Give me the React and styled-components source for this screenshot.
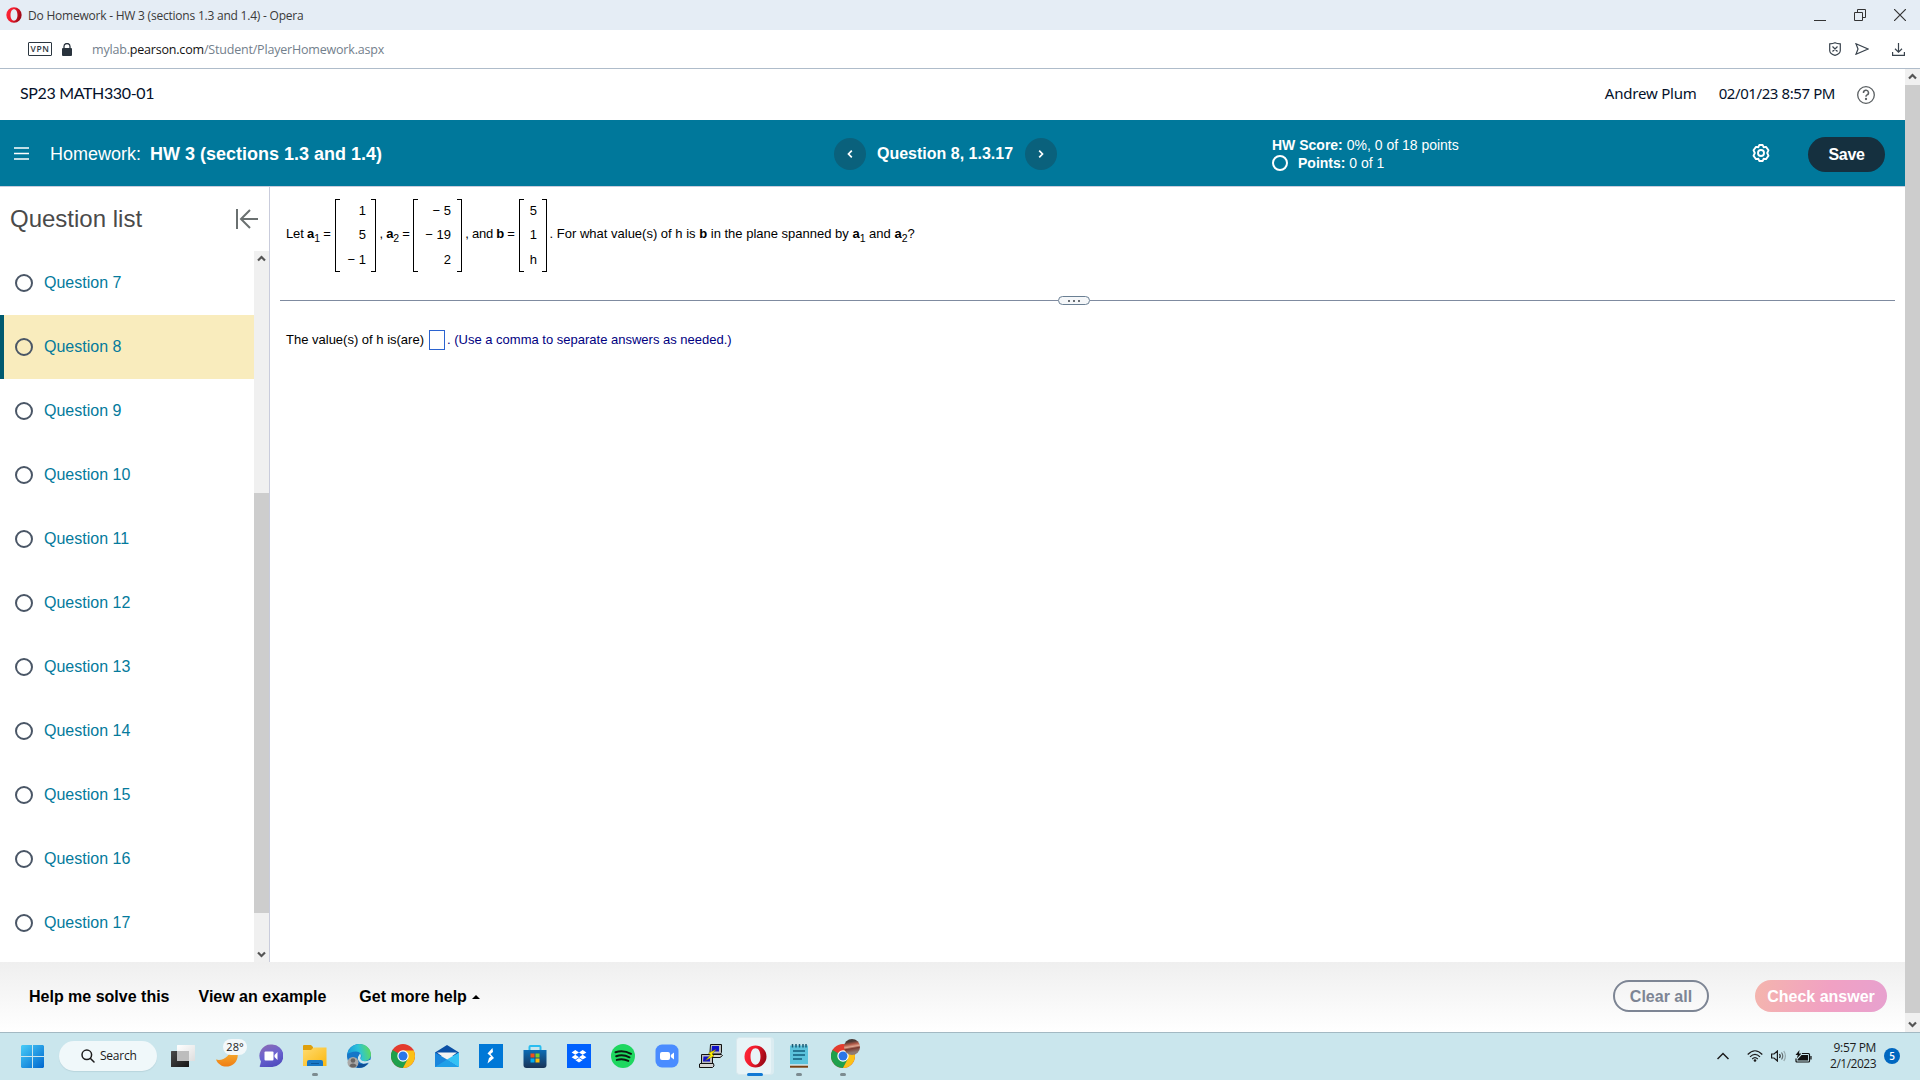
import React from "react";
import styled, { createGlobalStyle } from "styled-components";

const ui = `"Open Sans", "Noto Sans", sans-serif`;
const noto = `"Noto Sans", sans-serif`;
const arial = `"Liberation Sans", Arial, sans-serif`;

const Global = createGlobalStyle`
  *, *::before, *::after { box-sizing: border-box; }
  body { margin: 0; overflow: hidden; background: #fff; font-family: ${arial}; }
  svg { display: block; flex: none; }
`;

const Screen = styled.div`
  display: flex;
  flex-direction: column;
  width: 1920px;
  height: 1080px;
  overflow: hidden;
`;

const Text = styled.span`
  display: block;
  flex: none;
  white-space: pre;
  font-family: ${(p) => p.$font || arial};
  font-size: ${(p) => p.$size || 16}px;
  font-weight: ${(p) => p.$weight || 400};
  letter-spacing: ${(p) => p.$track || 0}px;
  line-height: ${(p) => p.$line || 20}px;
  color: ${(p) => p.$color || "inherit"};
`;

/* browser chrome */
const TitleBar = styled.header`
  display: flex;
  align-items: center;
  height: 30px;
  padding: 0 14px 0 6px;
  background: #e5edf5;
`;
const TitleText = styled(Text)`
  margin-left: 6px;
  padding-top: 2px;
`;
const WindowButtons = styled.div`
  display: flex;
  gap: 28px;
  margin-left: auto;
`;
const AddressBar = styled.div`
  display: flex;
  align-items: center;
  height: 39px;
  padding: 0 15px 0 28px;
  border-bottom: 1px solid #afbcca;
`;
const VpnBadge = styled.div`
  display: flex;
  align-items: center;
  justify-content: center;
  width: 24px;
  height: 14px;
  margin-right: 10px;
  border: 1px solid #2b3640;
  border-radius: 1px;
`;
const Url = styled(Text)`
  margin-left: 20px;
  padding-top: 2px;
  color: #73808c;
  b { font-weight: 400; color: #111; }
`;
const AddressTools = styled.div`
  display: flex;
  align-items: center;
  margin-left: auto;
  svg + svg { margin-left: 14px; }
  svg + svg + svg { margin-left: 23px; }
`;

/* page */
const Viewport = styled.div`
  display: flex;
  height: 963px;
`;
const Page = styled.div`
  display: flex;
  flex-direction: column;
  width: 1905px;
`;
const Scroll = styled.div`
  display: flex;
  flex-direction: column;
  justify-content: space-between;
  align-items: center;
  flex: none;
  width: 15px;
  padding: 4px 0;
  background: linear-gradient(#cdcdcd, #cdcdcd) 0 ${(p) => p.$from}px / 15px ${(p) => p.$len}px no-repeat #f0f0f0;
`;
const CourseBar = styled.div`
  display: flex;
  align-items: center;
  height: 51px;
  padding: 0 30px 0 20px;
  color: #05112a;
`;
const CourseText = styled(Text)`
  padding-bottom: 3px;
`;
const CourseUser = styled.div`
  display: flex;
  align-items: center;
  gap: 22px;
  margin-left: auto;
`;
const Toolbar = styled.div`
  display: grid;
  grid-template-columns: 834px 438px 480px 1fr;
  align-items: center;
  height: 67px;
  background: #00789b;
  border-bottom: 1px solid #c9ccdc;
  color: #fff;
`;
const Crumb = styled.div`
  display: flex;
  align-items: center;
  padding-left: 14px;
`;
const CrumbText = styled.div`
  display: flex;
  gap: 9px;
  margin-left: 21px;
  padding-top: 2px;
`;
const Pager = styled.div`
  display: flex;
  align-items: center;
  padding-top: 2px;
`;
const PagerTitle = styled.div`
  width: 159px;
  padding-left: 11px;
`;
const RoundButton = styled.button`
  display: flex;
  align-items: center;
  justify-content: center;
  width: 32px;
  height: 32px;
  padding: 0;
  border: 0;
  border-radius: 50%;
  background: #0a617c;
`;
const Score = styled.div`
  display: flex;
  flex-direction: column;
  padding-top: 2px;
`;
const ScoreLine = styled.div`
  display: flex;
  align-items: center;
  height: 18px;
`;
const Ring = styled.span`
  flex: none;
  width: ${(p) => p.$d}px;
  height: ${(p) => p.$d}px;
  border: 2px solid ${(p) => p.$c};
  border-radius: 50%;
`;
const PointsRing = styled(Ring)`
  margin-right: 10px;
`;
const ToolbarEnd = styled.div`
  display: flex;
  align-items: center;
`;
const Pill = styled.button`
  display: flex;
  align-items: center;
  justify-content: center;
  flex: none;
  width: ${(p) => p.$w}px;
  height: ${(p) => p.$h}px;
  padding: 0;
  border: ${(p) => p.$border || "0"};
  border-radius: 18px;
  background: ${(p) => p.$bg || "transparent"};
`;
const SaveButton = styled(Pill)`
  margin: 3px 0 0 38px;
`;
const Body = styled.div`
  display: flex;
  height: 775px;
`;
const Sidebar = styled.aside`
  display: flex;
  flex-direction: column;
  width: 270px;
  border-right: 1px solid #c9ccdc;
`;
const SidebarHead = styled.div`
  display: flex;
  align-items: center;
  justify-content: space-between;
  height: 64px;
  padding: 0 11px 0 10px;
`;
const SidebarBody = styled.div`
  display: flex;
  height: 711px;
`;
const List = styled.ul`
  flex: 1;
  margin: 0;
  padding: 0;
  list-style: none;
`;
const Item = styled.li`
  display: flex;
  align-items: center;
  gap: 11px;
  height: 64px;
  padding-left: ${(p) => (p.$active ? 11 : 15)}px;
  border-left: ${(p) => (p.$active ? "4px solid #005a70" : "0")};
  background: ${(p) => (p.$active ? "#f9ecbd" : "transparent")};
`;
const Main = styled.main`
  display: flex;
  flex-direction: column;
  flex: 1;
  padding: 12px 10px 0;
`;
const Problem = styled.div`
  display: flex;
  height: 73px;
  padding-left: 6px;
  color: #000;
`;
const Phrase = styled.div`
  flex: none;
  width: ${(p) => p.$w}px;
  margin-left: ${(p) => p.$pull || 0}px;
  padding-top: 25px;
  white-space: pre;
  font-size: 13px;
  line-height: 20px;
  letter-spacing: ${(p) => p.$track || 0}px;
`;
const Sub = styled.sub`
  font-size: 10.5px;
  line-height: 0;
  vertical-align: -4px;
`;
const Matrix = styled.div`
  display: flex;
  flex: none;
  justify-content: space-between;
  width: ${(p) => p.$w}px;
`;
const Bracket = styled.span`
  width: 5px;
  border: 1px solid #000;
  border-${(p) => p.$open}: 0;
`;
const Cells = styled.div`
  display: flex;
  flex-direction: column;
  flex: 1;
  align-items: flex-end;
  padding: 0 ${(p) => p.$pad}px 0 0;
  font-size: 13px;
  line-height: 24.4px;
  white-space: pre;
`;
const Divider = styled.div`
  display: flex;
  align-items: center;
  height: 9px;
  margin-top: 24px;
`;
const Rule = styled.span`
  width: ${(p) => p.$w}px;
  height: 1px;
  background: #7f8ba0;
`;
const Handle = styled.span`
  display: flex;
  align-items: center;
  justify-content: center;
  gap: 3px;
  width: 32px;
  height: 9px;
  border: 1px solid #6a7f93;
  border-radius: 5px;
  background: #f5f7f9;
  i { width: 2px; height: 2px; background: #6a6f75; }
`;
const Answer = styled.div`
  display: flex;
  align-items: center;
  margin-top: 25px;
  padding-left: 6px;
`;
const AnswerBox = styled.span`
  width: 16px;
  height: 20px;
  margin: 0 2px 0 5px;
  border: 1px solid #2b63d0;
`;
const Footer = styled.footer`
  display: flex;
  align-items: center;
  height: 70px;
  padding: 0 18px 0 29px;
  background: linear-gradient(#efefef, #fff);
`;
const FooterLinks = styled.nav`
  display: flex;
  align-items: center;
  gap: 29px;
`;
const MoreHelp = styled.div`
  display: flex;
  align-items: center;
  gap: 5px;
  margin-left: 4px;
`;
const FooterButtons = styled.div`
  display: flex;
  gap: 46px;
  margin-left: auto;
  padding-bottom: 2px;
`;
const ButtonText = styled(Text)`
  padding-top: 1px;
`;

/* taskbar */
const Taskbar = styled.div`
  display: flex;
  align-items: center;
  height: 48px;
  padding: 0 20px 0 21px;
  border-top: 1px solid #a3b9c3;
  background: #cae6ed;
`;
const SearchBox = styled.div`
  display: flex;
  align-items: center;
  gap: 5px;
  width: 98px;
  height: 30px;
  margin: 0 0 1px 15px;
  padding-left: 22px;
  border-radius: 15px;
  background: #f0f8fa;
  box-shadow: 0 1px 1px #b9d5dd;
`;
const Apps = styled.div`
  display: flex;
  margin-left: 4px;
`;
const App44 = styled.div`
  position: relative;
  display: flex;
  align-items: center;
  justify-content: center;
  width: 44px;
  height: 47px;
  padding-bottom: 1px;
`;
const Tile = styled.div`
  display: flex;
  align-items: center;
  justify-content: center;
  width: 38px;
  height: 38px;
  padding-left: 3px;
  border: 1px solid #d8e8ed;
  border-right: 3px solid #dbecf1;
  border-radius: 4px;
  background: #e8f4f7;
`;
const Running = styled.span`
  position: absolute;
  bottom: 4px;
  left: ${(p) => (p.$active ? 14 : 19)}px;
  width: ${(p) => (p.$active ? 16 : 6)}px;
  height: 3px;
  border-radius: 2px;
  background: ${(p) => (p.$active ? "#0f78d4" : "#7c8b90")};
`;
const TempBadge = styled.span`
  position: absolute;
  top: 6px;
  left: 18px;
  display: flex;
  align-items: center;
  justify-content: center;
  width: 24px;
  height: 16px;
  border-radius: 8px;
  background: #f3f8fa;
`;
const Avatar = styled.span`
  position: absolute;
  top: 6px;
  left: 23px;
  width: 16px;
  height: 16px;
  border-radius: 50%;
  background: linear-gradient(170deg, #4b3a36 20%, #b05a48 35%, #e0a58f 48%, #7a3a30 58%, #8f7a72 80%);
`;
const Tray = styled.div`
  display: flex;
  align-items: center;
  margin-left: auto;
  padding-bottom: 1px;
`;
const TrayIcons = styled.div`
  display: flex;
  align-items: center;
  gap: 8px;
  margin-left: 18px;
`;
const Clock = styled.div`
  display: flex;
  flex-direction: column;
  align-items: flex-end;
  width: 64px;
`;
const Count = styled.span`
  display: flex;
  align-items: center;
  justify-content: center;
  width: 16px;
  height: 16px;
  margin-left: 8px;
  border-radius: 50%;
  background: #0067c0;
`;

const Svg = ({ w, h, children, ...r }) => (
  <svg width={w} height={h} viewBox={`0 0 ${w} ${h}`} fill="none" {...r}>{children}</svg>
);

const OperaLogo = ({ s, id }) => (
  <svg width={s} height={s} viewBox="0 0 24 24">
    <defs>
      <linearGradient id={id} x1="0" y1="0" x2="1" y2="0.3">
        <stop offset="0" stopColor="#ff2a3b" /><stop offset="0.5" stopColor="#f01a2b" /><stop offset="1" stopColor="#a00a18" />
      </linearGradient>
    </defs>
    <path fillRule="evenodd" fill={`url(#${id})`} d="M12 0.500a11.500 11.500 0 1 0 0 23a11.500 11.500 0 1 0 0-23zM12 3.500c3.200 0 5.200 3.600 5.200 8.500s-2 8.500-5.200 8.500s-5.200-3.600-5.200-8.500s2-8.500 5.200-8.500z" />
  </svg>
);

const ScrollArrow = ({ down }) => (
  <Svg w={9} h={7}>
    <path d={down ? "M1 1.500L4.500 5L8 1.500" : "M1 5.500L4.500 2L8 5.500"} stroke="#555" strokeWidth="2.200" />
  </Svg>
);

const Chrome = () => (
  <svg width="24" height="24" viewBox="0 0 24 24">
    <circle cx="12" cy="12" r="12" fill="#e33b2e" />
    <path d="M12 12L1.600 6A12 12 0 0 0 12 24L17.200 15z" fill="#1fa04c" />
    <path d="M12 6.600H22.700A12 12 0 0 1 12 24L17 14.600z" fill="#fbc116" />
    <circle cx="12" cy="12" r="5.700" fill="#fff" />
    <circle cx="12" cy="12" r="4.500" fill="#2b76e8" />
  </svg>
);

const WindowsLogo = () => (
  <Svg w={23} h={23}>
    <defs><linearGradient id="win" x1="0" y1="0" x2="1" y2="1"><stop offset="0" stopColor="#48cdf8" /><stop offset="1" stopColor="#0067cf" /></linearGradient></defs>
    <path fill="url(#win)" d="M1 0H11V11H0V1zM12 0H22L23 1V11H12zM0 12H11V23H1L0 22zM12 12H23V22L22 23H12z" />
  </Svg>
);

const TaskView = () => (
  <Svg w={24} h={22}>
    <defs>
      <linearGradient id="tv" x1="0" y1="0" x2="1" y2="1"><stop offset="0" stopColor="#4a4a4a" /><stop offset="1" stopColor="#151515" /></linearGradient>
      <linearGradient id="tw" x1="0" y1="0" x2="1" y2="1"><stop offset="0" stopColor="#fff" /><stop offset="1" stopColor="#dedede" /></linearGradient>
    </defs>
    <rect x="0" y="6" width="18" height="16" rx="0.500" fill="url(#tv)" />
    <rect x="6" y="0" width="18" height="16" rx="0.500" fill="url(#tw)" />
    <rect x="6" y="6" width="12" height="10" fill="#bdbdbd" />
  </Svg>
);

const Moon = () => (
  <Svg w={24} h={24}>
    <defs><linearGradient id="moon" x1="0" y1="0" x2="0" y2="1"><stop offset="0" stopColor="#f9c23c" /><stop offset="1" stopColor="#ef7d14" /></linearGradient></defs>
    <path fill="url(#moon)" d="M1 15.500C8 17.500 16 12 16.500 2C21 4 23.500 8.500 22.500 13.500C20.500 24.500 5 26 1 15.500z" />
  </Svg>
);

const Chat = () => (
  <Svg w={24} h={24}>
    <defs><linearGradient id="chat" x1="0.200" y1="0" x2="0.600" y2="1"><stop offset="0" stopColor="#8a6bb5" /><stop offset="0.500" stopColor="#6a62d0" /><stop offset="1" stopColor="#4f4bbd" /></linearGradient></defs>
    <path fill="url(#chat)" d="M12 0.500A11.300 11.300 0 1 1 12 23H1.500C0.500 23 0.500 22 1 21.500L2 17.500A11.300 11.300 0 0 1 12 0.500z" />
    <rect x="5.500" y="7.500" width="9" height="9" rx="1" fill="#fff" />
    <path fill="#fff" d="M15.500 11L18.500 8V16L15.500 13z" />
  </Svg>
);

const Folder = () => (
  <Svg w={24} h={24}>
    <defs><linearGradient id="fold" x1="0" y1="0" x2="1" y2="1"><stop offset="0" stopColor="#ffdb70" /><stop offset="1" stopColor="#fbb80f" /></linearGradient></defs>
    <path fill="#dfa00c" d="M0 2Q0 1 1 1H8L10 3V7H0z" />
    <path fill="url(#fold)" d="M0 6H8L10.500 3.500H23.500V22H0z" />
    <path fill="#1878c7" d="M4 22V18Q4 16 6 16H18Q20 16 20 18V22z" />
    <path stroke="#0b579c" strokeWidth="1" d="M8 19.500H16" />
  </Svg>
);

const Edge = () => (
  <Svg w={24} h={24}>
    <defs>
      <linearGradient id="eg" x1="0" y1="0.500" x2="1" y2="0.300"><stop offset="0" stopColor="#1699dd" /><stop offset="0.500" stopColor="#2cc3d8" /><stop offset="1" stopColor="#62dc54" /></linearGradient>
    </defs>
    <circle cx="12" cy="12" r="12" fill="#1677c8" />
    <path fill="url(#eg)" d="M0.300 10C2 3.500 7 0 12.500 0C19 0 24 5 24 10.500C24 14.500 21 17 17.500 17C14 17 13 15.500 14 14C15.500 11 13 7.500 9 7.500C5 7.500 2 9 0.300 10z" />
    <path fill="#cae6ed" d="M13 9.500C15 12 13 13.500 13.500 15C14.500 17.500 19 18 22.500 16H24V18L21 19.500C15 21 10 17.500 11 13z" />
    <path fill="#0e4f96" d="M9 15C10 20 15 21.500 21.500 18.500C19 22.500 14.500 24.500 10 23.600z" />
    <circle cx="6" cy="18.500" r="5.500" fill="#aaa9a7" />
    <circle cx="6" cy="16.500" r="2.300" fill="#696664" />
    <path fill="#696664" d="M2.500 22Q3 19.500 6 19.500T9.500 22Q6 25 2.500 22z" />
  </Svg>
);

const Mail = () => (
  <Svg w={24} h={24}>
    <path fill="#0a4fa5" d="M0 8.500L12 1L24 8.500V12H0z" />
    <path fill="#f3f3f3" d="M2 8.500H22L12 16z" />
    <path fill="#1a86dc" d="M0 8.500L12 15.500L24 23H0z" />
    <path fill="#33c2f5" d="M24 8.500L12 15.500L24 23z" />
    <path fill="#1f9fe8" d="M0 23L12 15.500L24 23z" />
  </Svg>
);

const Bolt = () => (
  <Svg w={24} h={24}>
    <path fill="#0078d7" d="M0 0H24V24H0z" />
    <path fill="#fff" d="M13.500 4L8.500 9.500L12 12.500L10 14L8.500 19.500L15 14L11.500 10L14 8z" />
  </Svg>
);

const Store = () => (
  <Svg w={24} h={24}>
    <defs><linearGradient id="st" x1="0" y1="0" x2="0" y2="1"><stop offset="0" stopColor="#0c6cb5" /><stop offset="1" stopColor="#183458" /></linearGradient></defs>
    <path d="M6.500 7V3Q6.500 2 7.500 2H16.500Q17.500 2 17.500 3V7" stroke="#2bbdf0" strokeWidth="2" />
    <path fill="url(#st)" d="M0.500 6H23.500V21Q23.500 24 20.500 24H3.500Q0.500 24 0.500 21z" />
    <path fill="#f1511b" d="M7.500 9.500H11.500V13.500H7.500z" /><path fill="#80cc28" d="M12.500 9.500H16.500V13.500H12.500z" />
    <path fill="#00adef" d="M7.500 14.500H11.500V18.500H7.500z" /><path fill="#fbbc09" d="M12.500 14.500H16.500V18.500H12.500z" />
  </Svg>
);

const Dropbox = () => (
  <Svg w={24} h={24}>
    <path fill="#0061fe" d="M0 0H24V24H0z" />
    <path fill="#fff" d="M8.300 6L12 8.400L8.300 10.800L4.600 8.400zM15.700 6L19.400 8.400L15.700 10.800L12 8.400zM8.300 10.800L12 13.200L8.300 15.600L4.600 13.200zM15.700 10.800L19.400 13.200L15.700 15.600L12 13.200zM12 14L15.500 16.300L12 18.600L8.500 16.300z" />
  </Svg>
);

const Spotify = () => (
  <Svg w={24} h={24}>
    <circle cx="12" cy="12" r="12" fill="#1ed760" />
    <path d="M4.500 8.200Q12.500 5.800 20 9.800M5.200 12.200Q12 10 18.500 13.300M5.800 15.900Q12 14.200 17.300 16.900" stroke="#0b1a10" strokeWidth="2" strokeLinecap="round" />
  </Svg>
);

const Zoom = () => (
  <Svg w={24} h={24}>
    <rect x="0.500" y="0.500" width="23" height="23" rx="6.500" fill="#4a8cff" />
    <rect x="5" y="8" width="10" height="8" rx="2" fill="#fff" />
    <path fill="#fff" d="M15.800 11L19 8.500V15.500L15.800 13z" />
  </Svg>
);

const Putty = () => (
  <Svg w={24} h={24}>
    <path fill="#bdbdbd" stroke="#111" d="M11.500 0.500H22.500V8.500L21.500 10H12.500L11 8z" />
    <path fill="#1010c8" d="M13 2H20V7.500H12.500z" />
    <path fill="#d4d4d4" stroke="#111" d="M12 10.500H22.500L23.500 11.500L21 13.500H12z" />
    <path fill="#bdbdbd" stroke="#111" d="M2.500 10.500H13.500V19L12.500 19.500H2.500z" />
    <path fill="#1010c8" d="M4.500 12.500H11V17.500H4z" />
    <path fill="#d4d4d4" stroke="#111" d="M1 19.500H14.500L15 22L13.500 23.500H0.500V20z" />
    <path fill="#ffef00" stroke="#6b6500" strokeWidth="0.500" d="M17 5.500L9.500 9L11.500 11L6.500 16.500L15 12L13 10z" />
  </Svg>
);

const Notepad = () => (
  <Svg w={20} h={24}>
    <rect x="1" y="1.500" width="18" height="19" fill="#5cc3dc" />
    <path d="M3.500 0V3.500M7 0V3.500M10.500 0V3.500M14 0V3.500M17 0V3.500" stroke="#1a5a73" strokeWidth="1.500" />
    <path d="M4 7H16M4 11H16M4 15H13" stroke="#135f7c" strokeWidth="1.500" />
    <path d="M1 21H19" stroke="#e9e9e9" strokeWidth="1" />
    <path d="M1 22.700H19" stroke="#7a4112" strokeWidth="2" />
  </Svg>
);

const questions = [7, 8, 9, 10, 11, 12, 13, 14, 15, 16, 17];

const apps = [
  { icon: <TaskView /> },
  { icon: <Moon />, temp: "28°" },
  { icon: <Chat /> },
  { icon: <Folder />, run: true },
  { icon: <Edge /> },
  { icon: <Chrome /> },
  { icon: <Mail /> },
  { icon: <Bolt /> },
  { icon: <Store /> },
  { icon: <Dropbox /> },
  { icon: <Spotify /> },
  { icon: <Zoom /> },
  { icon: <Putty /> },
  { icon: <OperaLogo s={23} id="op2" />, active: true },
  { icon: <Notepad />, run: true },
  { icon: <Chrome />, run: true, avatar: true },
];

export default function App() {
  return (
    <Screen>
      <Global />
      <TitleBar>
        <OperaLogo s={16} id="op1" />
        <TitleText $font={ui} $size={12} $track={-0.22} $color="#3a3a3a">Do Homework - HW 3 (sections 1.3 and 1.4) - Opera</TitleText>
        <WindowButtons>
          <Svg w={12} h={12} stroke="#333"><path d="M0 11.500H12" /></Svg>
          <Svg w={12} h={12} stroke="#333"><path d="M0.500 3.500H8.500V11.500H0.500zM3.500 3.500V0.500H11.500V8.500H8.500" /></Svg>
          <Svg w={12} h={12} stroke="#333" strokeWidth="1.200"><path d="M0 0L12 12M12 0L0 12" /></Svg>
        </WindowButtons>
      </TitleBar>
      <AddressBar>
        <VpnBadge><Text $font={ui} $size={8.5} $weight={600} $track={0.6} $line={12} $color="#2b3640">VPN</Text></VpnBadge>
        <Svg w={10} h={13}><path fill="#29333d" d="M0 6Q0 5 1 5H9Q10 5 10 6V12Q10 13 9 13H1Q0 13 0 12z" /><path d="M2 6V3.500A3 3 0 0 1 8 3.500V6" stroke="#29333d" strokeWidth="1.300" /></Svg>
        <Url $font={ui} $size={12.5} $track={-0.19}>mylab.<b>pearson.com</b>/Student/PlayerHomework.aspx</Url>
        <AddressTools>
          <Svg w={12} h={14} stroke="#39434d" strokeWidth="1.200"><path d="M6 0.700Q8 1.500 11.300 1.800V8.500Q11.300 12 6 13.300Q0.700 12 0.700 8.500V1.800Q4 1.500 6 0.700zM3.500 4.500L8.500 9.500M8.500 4.500L3.500 9.500" /></Svg>
          <Svg w={14} h={12} stroke="#39434d" strokeWidth="1.200"><path d="M1 0.800L13 6L1 11.200L3 6z" /></Svg>
          <Svg w={13} h={13} stroke="#39434d" strokeWidth="1.200"><path d="M6.500 0V9M3 5.800L6.500 9.200L10 5.800M0.600 9V12.300H12.400V9" /></Svg>
        </AddressTools>
      </AddressBar>

      <Viewport>
        <Page>
          <CourseBar>
            <CourseText $font={`Lato, ${ui}`} $size={16} $track={-0.36}>SP23 MATH330-01</CourseText>
            <CourseUser>
              <CourseText $font={noto} $size={15} $track={-0.2}>Andrew Plum</CourseText>
              <CourseText $font={noto} $size={15} $track={-0.41}>02/01/23 8:57 PM</CourseText>
              <Svg w={18} h={18} stroke="#5a5f62" strokeWidth="1.300"><circle cx="9" cy="9" r="8.300" /><path d="M6.500 7A2.500 2.500 0 1 1 9.700 9.100Q9 9.400 9 10.800" strokeWidth="1.500" /><circle cx="9" cy="13" r="0.500" fill="#5a5f62" /></Svg>
            </CourseUser>
          </CourseBar>
          <Toolbar>
            <Crumb>
              <Svg w={15} h={13} stroke="#fff" strokeWidth="1.600"><path d="M0 1H15M0 6.500H15M0 12H15" /></Svg>
              <CrumbText>
                <Text $size={18}>Homework:</Text>
                <Text $size={18} $weight={700}>HW 3 (sections 1.3 and 1.4)</Text>
              </CrumbText>
            </Crumb>
            <Pager>
              <RoundButton><Svg w={6} h={8} stroke="#fff" strokeWidth="1.700"><path d="M4.800 0.700L1.500 4L4.800 7.300" /></Svg></RoundButton>
              <PagerTitle><Text $size={16} $weight={700}>Question 8, 1.3.17</Text></PagerTitle>
              <RoundButton><Svg w={6} h={8} stroke="#fff" strokeWidth="1.700"><path d="M1.200 0.700L4.500 4L1.200 7.300" /></Svg></RoundButton>
            </Pager>
            <Score>
              <ScoreLine><Text $size={14} $weight={700}>HW Score:</Text><Text $size={14}> 0%, 0 of 18 points</Text></ScoreLine>
              <ScoreLine><PointsRing $d={16} $c="#fff" /><Text $size={14} $weight={700}>Points:</Text><Text $size={14}> 0 of 1</Text></ScoreLine>
            </Score>
            <ToolbarEnd>
              <Svg w={18} h={18} stroke="#fff" strokeWidth="1.900" strokeLinejoin="round"><path d="M7.300 1H10.700L11.600 3.200L14 2.900L16.500 6.200L15.200 9L16.500 11.800L14 15.100L11.600 14.800L10.700 17H7.300L6.400 14.800L4 15.100L1.500 11.800L2.800 9L1.500 6.200L4 2.900L6.400 3.200z" /><circle cx="9" cy="9" r="3" /></Svg>
              <SaveButton $w={77} $h={35} $bg="#15303f"><Text $size={16} $weight={700} $track={-0.3} $color="#fff">Save</Text></SaveButton>
            </ToolbarEnd>
          </Toolbar>
          <Body>
            <Sidebar>
              <SidebarHead>
                <Text $size={24} $line={28} $color="#4a4a4a">Question list</Text>
                <Svg w={22} h={20} stroke="#6a7070" strokeWidth="2"><path d="M1 0V20M22 10H5M14 1L5 10L14 19" /></Svg>
              </SidebarHead>
              <SidebarBody>
                <List>
                  {questions.map((n) => (
                    <Item key={n} $active={n === 8}>
                      <Ring $d={18} $c="#4a5666" />
                      <Text $color="#047a9c">Question {n}</Text>
                    </Item>
                  ))}
                </List>
                <Scroll $from={242} $len={420}><ScrollArrow /><ScrollArrow down /></Scroll>
              </SidebarBody>
            </Sidebar>
            <Main>
              <Problem>
                <Phrase $w={49} $track={-0.15}>Let <b>a</b><Sub>1</Sub> =</Phrase>
                <Matrix $w={41}><Bracket $open="right" /><Cells $pad={5}><span>1</span><span>5</span><span>− 1</span></Cells><Bracket $open="left" /></Matrix>
                <Phrase $w={37} $track={-0.2}> , <b>a</b><Sub>2</Sub> =</Phrase>
                <Matrix $w={49}><Bracket $open="right" /><Cells $pad={6}><span>− 5</span><span>− 19</span><span>2</span></Cells><Bracket $open="left" /></Matrix>
                <Phrase $w={57} $track={-0.28}> , and <b>b</b> =</Phrase>
                <Matrix $w={28}><Bracket $open="right" /><Cells $pad={5}><span>5</span><span>1</span><span>h</span></Cells><Bracket $open="left" /></Matrix>
                <Phrase $w={400} $pull={-1}> . For what value(s) of h is <b>b</b> in the plane spanned by <b>a</b><Sub>1</Sub> and <b>a</b><Sub>2</Sub>?</Phrase>
              </Problem>
              <Divider><Rule $w={778} /><Handle><i /><i /><i /></Handle><Rule $w={805} /></Divider>
              <Answer>
                <Text $size={13} $color="#000">The value(s) of h is(are)</Text>
                <AnswerBox />
                <Text $size={13} $color="#00007f">. (Use a comma to separate answers as needed.)</Text>
              </Answer>
            </Main>
          </Body>
          <Footer>
            <FooterLinks>
              <Text $weight={700}>Help me solve this</Text>
              <Text $weight={700}>View an example</Text>
              <MoreHelp>
                <Text $weight={700}>Get more help</Text>
                <Svg w={8} h={4}><path d="M0 4L4 0L8 4z" fill="#000" /></Svg>
              </MoreHelp>
            </FooterLinks>
            <FooterButtons>
              <Pill $w={96} $h={32} $border="2px solid #7d8594"><ButtonText $weight={700} $color="#7d8594">Clear all</ButtonText></Pill>
              <Pill $w={132} $h={32} $bg="linear-gradient(100deg, #f4b5ad, #f1a1c3 55%, #e7a1cf)"><ButtonText $weight={700} $color="#fff">Check answer</ButtonText></Pill>
            </FooterButtons>
          </Footer>
        </Page>
        <Scroll $from={16} $len={928}><ScrollArrow /><ScrollArrow down /></Scroll>
      </Viewport>

      <Taskbar>
        <WindowsLogo />
        <SearchBox>
          <Svg w={14} h={14} stroke="#1c1c1c" strokeWidth="1.500" strokeLinecap="round"><circle cx="5.800" cy="5.800" r="4.800" /><path d="M9.500 9.500L13 13" /></Svg>
          <Text $font={ui} $size={12} $track={-0.25} $color="#1c1c1c">Search</Text>
        </SearchBox>
        <Apps>
          {apps.map((a, i) => (
            <App44 key={i}>
              {a.active ? <Tile>{a.icon}</Tile> : a.icon}
              {(a.run || a.active) && <Running $active={a.active} />}
              {a.temp && <TempBadge><Text $font={ui} $size={11} $line={14} $color="#222">{a.temp}</Text></TempBadge>}
              {a.avatar && <Avatar />}
            </App44>
          ))}
        </Apps>
        <Tray>
          <Svg w={12} h={8} stroke="#1c1c1c" strokeWidth="1.500"><path d="M0.500 7L6 1.500L11.500 7" /></Svg>
          <TrayIcons>
            <Svg w={16} h={12} stroke="#1c1c1c" strokeWidth="1.200"><path d="M0.700 4.500Q8-3 15.300 4.500M3 6.800Q8 1.800 13 6.800M5.200 9Q8 6.300 10.800 9" /><circle cx="8" cy="10.500" r="1.300" fill="#1c1c1c" stroke="none" /></Svg>
            <Svg w={16} h={12} stroke="#1c1c1c" strokeWidth="1.200"><path d="M0.600 4H3L6.400 1V11L3 8H0.600zM8.500 4Q9.800 6 8.500 8" /><path d="M10.500 2.500Q13 6 10.500 9.500" opacity="0.600" /><path d="M12.800 1Q16 6 12.800 11" opacity="0.300" /></Svg>
            <Svg w={17} h={13}><path fill="#111" d="M6.500 5H13V10.500H2.500V9.500z" /><path d="M7 3.500H13.500Q14.500 3.500 14.500 4.500V11Q14.500 12 13.500 12H2Q1 12 1 11V8.500M16 6V9.500" stroke="#111" strokeWidth="1.200" /><path fill="#111" d="M4.500 0L0.500 5H2.800L1.800 8.500L6.500 3.500H4z" /></Svg>
          </TrayIcons>
          <Clock>
            <Text $font={ui} $size={12} $line={16} $track={-0.35} $color="#1c1c1c">9:57 PM</Text>
            <Text $font={ui} $size={12} $line={16} $track={-0.5} $color="#1c1c1c">2/1/2023</Text>
          </Clock>
          <Count><Text $font={ui} $size={10} $line={14} $weight={600} $color="#fff">5</Text></Count>
        </Tray>
      </Taskbar>
    </Screen>
  );
}
